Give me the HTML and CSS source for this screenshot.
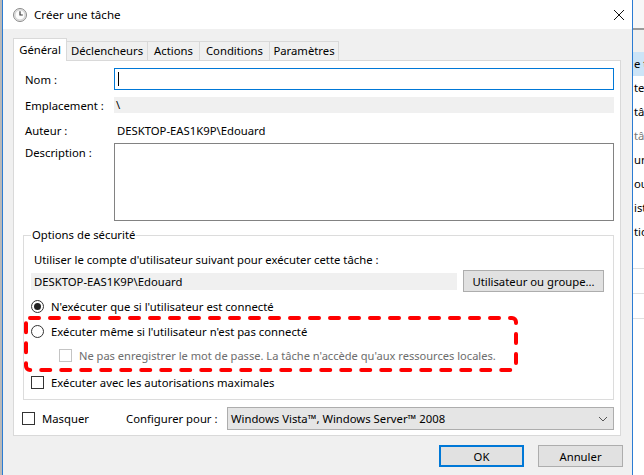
FILE: index.html
```html
<!DOCTYPE html>
<html lang="fr">
<head>
    <meta charset="UTF-8">
    <title>Créer une tâche</title>
    <link rel="stylesheet" href="styles.css">
</head>
<body>
    <div class="screen">
        <div class="bg-left"></div>

        <div class="dialog">
            <div class="titlebar">
                <svg class="app-icon" width="16" height="16" viewBox="0 0 16 16">
                    <circle cx="8" cy="8" r="6.5" fill="#e9e9e9" stroke="#8a8a8a"/>
                    <circle cx="8" cy="8" r="5" fill="#fdfdfd" stroke="#c9c9c9" stroke-width="0.8"/>
                    <path d="M8 4.2V8H10.8" fill="none" stroke="#3a3a3a" stroke-width="1.2"/>
                </svg>
                <span class="title">Créer une tâche</span>
                <svg class="close" width="12" height="12" viewBox="0 0 12 12">
                    <path d="M1 1L11 11M11 1L1 11" stroke="#111" stroke-width="1"/>
                </svg>
            </div>

            <div class="content">
                <div class="tabs">
                    <div class="tab active" style="width:52px">Général</div>
                    <div class="tab" style="width:80px">Déclencheurs</div>
                    <div class="tab" style="width:51px">Actions</div>
                    <div class="tab" style="width:69px">Conditions</div>
                    <div class="tab" style="width:68px">Paramètres</div>
                </div>

                <div class="panel">
                    <div class="field-row">
                        <label class="field-label">Nom :</label>
                        <div class="text-input focused"><span class="caret"></span></div>
                    </div>
                    <div class="field-row row-location">
                        <label class="field-label">Emplacement :</label>
                        <div class="readonly">\</div>
                    </div>
                    <div class="field-row row-author">
                        <label class="field-label">Auteur :</label>
                        <div class="plain-value">DESKTOP-EAS1K9P\Edouard</div>
                    </div>
                    <div class="field-row row-desc">
                        <label class="field-label">Description :</label>
                        <div class="textarea"></div>
                    </div>

                    <fieldset class="group">
                        <legend>Options de sécurité</legend>
                        <div class="group-hint">Utiliser le compte d'utilisateur suivant pour exécuter cette tâche :</div>
                        <div class="account-row">
                            <div class="account-field">DESKTOP-EAS1K9P\Edouard</div>
                            <button class="btn">Utilisateur ou groupe...</button>
                        </div>
                        <div class="option">
                            <span class="radio checked"></span>
                            <span>N'exécuter que si l'utilisateur est connecté</span>
                        </div>
                        <div class="highlight">
                            <svg class="dash-frame" width="494" height="56" viewBox="0 0 494 56">
                                <rect x="2" y="2" width="490" height="52" rx="4" fill="none" stroke="#ff0000" stroke-width="4" stroke-dasharray="9 11" stroke-linecap="round"/>
                            </svg>
                            <div class="option">
                                <span class="radio"></span>
                                <span>Exécuter même si l'utilisateur n'est pas connecté</span>
                            </div>
                            <div class="option sub disabled">
                                <span class="checkbox"></span>
                                <span class="note">Ne pas enregistrer le mot de passe. La tâche n'accède qu'aux ressources locales.</span>
                            </div>
                        </div>
                        <div class="option max">
                            <span class="checkbox"></span>
                            <span>Exécuter avec les autorisations maximales</span>
                        </div>
                    </fieldset>

                    <div class="bottom-row">
                        <div class="option hide">
                            <span class="checkbox"></span>
                            <span>Masquer</span>
                        </div>
                        <span class="config-label">Configurer pour :</span>
                        <div class="select">
                            <span>Windows Vista™, Windows Server™ 2008</span>
                            <svg width="10" height="6" viewBox="0 0 10 6">
                                <path d="M1 1L5 5L9 1" fill="none" stroke="#555" stroke-width="1"/>
                            </svg>
                        </div>
                    </div>
                </div>

                <div class="buttons">
                    <button class="btn dlg default">OK</button>
                    <button class="btn dlg">Annuler</button>
                </div>
            </div>
        </div>

        <div class="bg-right">
            <div class="bg-top"></div>
            <div class="bg-header"></div>
            <div class="bg-row selected">e t</div>
            <div class="bg-row">te</div>
            <div class="bg-row">tâ</div>
            <div class="bg-row muted">tâ</div>
            <div class="bg-row">un</div>
            <div class="bg-row">ou</div>
            <div class="bg-row">ist</div>
            <div class="bg-row">tio</div>
            <div class="bg-line"></div>
            <div class="bg-line"></div>
            <div class="bg-line"></div>
        </div>
    </div>
</body>
</html>
```

FILE: styles.css
```css
body {
    margin: 0;
    font-family: "Noto Sans", "Open Sans", sans-serif;
    font-size: 11.3px;
    color: #000;
    background-color: #f0f0f0;
}
.screen {
    display: flex;
    width: 644px;
    height: 475px;
    overflow: hidden;
}
.bg-left {
    width: 2px;
    background-color: #b9b9b9;
}
.dialog {
    width: 629px;
    border-left: 1px solid #2b7cd3;
    border-right: 1px solid #2b7cd3;
    background-color: #f0f0f0;
    display: flex;
    flex-direction: column;
}
.titlebar {
    height: 29px;
    background-color: #fff;
    display: flex;
    align-items: center;
}
.app-icon {
    margin-left: 9px;
    margin-right: 6px;
}
.title {
    font-size: 11.6px;
    flex: 1;
}
.close {
    margin-right: 7px;
}
.content {
    padding: 9px 11px 0 10px;
}
.tabs {
    display: flex;
    align-items: flex-end;
    height: 23px;
    margin-bottom: -1px;
    position: relative;
    z-index: 1;
}
.tab {
    height: 18px;
    line-height: 18px;
    border: 1px solid #d9d9d9;
    margin-left: -1px;
    text-align: center;
    background-color: #f0f0f0;
    box-sizing: content-box;
}
.tab.active {
    height: 22px;
    line-height: 21px;
    border-bottom: none;
    background-color: #fff;
    margin-left: 0;
    z-index: 2;
}
.panel {
    background-color: #fff;
    border: 1px solid #d9d9d9;
    padding: 7px 6px 5px 9px;
}
.field-row {
    display: flex;
    align-items: center;
}
.field-label {
    width: 89px;
    padding-left: 2px;
    flex-shrink: 0;
}
.text-input {
    flex: 1;
    height: 20px;
    border: 1px solid #0078d7;
    display: flex;
    align-items: center;
}
.caret {
    width: 1px;
    height: 14px;
    margin-left: 3px;
    background-color: #000;
}
.row-location {
    margin-top: 7px;
}
.readonly {
    flex: 1;
    height: 16px;
    line-height: 16px;
    padding-left: 2px;
    background-color: #f0f0f0;
}
.row-author {
    margin-top: 9px;
    height: 16px;
}
.plain-value {
    padding-left: 3px;
}
.row-desc {
    margin-top: 5px;
    align-items: flex-start;
}
.row-desc .field-label {
    padding-top: 2px;
}
.textarea {
    flex: 1;
    height: 76px;
    border: 1px solid #828282;
}
.group {
    margin: 6px 0 0 0;
    padding: 0 7px 9px 7px;
    border: 1px solid #dcdcdc;
    min-width: 0;
}
.group legend {
    padding: 0 1px;
    line-height: 16px;
}
.group-hint {
    margin-top: 9px;
    padding-left: 3px;
    line-height: 16px;
}
.account-row {
    display: flex;
    align-items: center;
    gap: 6px;
    margin-top: 2px;
}
.account-field {
    width: 423px;
    height: 17px;
    line-height: 17px;
    padding-left: 3px;
    background-color: #f0f0f0;
}
.btn {
    font-family: inherit;
    font-size: inherit;
    color: #000;
    height: 22px;
    padding: 0;
    background-color: #e1e1e1;
    border: 1px solid #adadad;
}
.account-row .btn {
    width: 141px;
}
.option {
    display: flex;
    align-items: center;
    gap: 7px;
    height: 16px;
    margin-top: 6px;
}
.radio {
    width: 11px;
    height: 11px;
    border: 1px solid #333;
    border-radius: 50%;
    display: flex;
    align-items: center;
    justify-content: center;
    flex-shrink: 0;
}
.radio.checked::after {
    content: "";
    width: 7px;
    height: 7px;
    border-radius: 50%;
    background-color: #222;
}
.checkbox {
    width: 11px;
    height: 11px;
    border: 1px solid #333;
    flex-shrink: 0;
}
.highlight {
    position: relative;
    margin: 2px 0 0 -7px;
    width: 487px;
    padding: 7px 0 9px 7px;
}
.dash-frame {
    position: absolute;
    left: 0;
    top: 0;
}
.highlight .option:first-of-type {
    margin-top: 0;
}
.option.sub {
    margin-top: 8px;
    margin-left: 28px;
}
.option.disabled {
    color: #6d6d6d;
}
.option.disabled .checkbox {
    border-color: #c4c4c4;
}
.note {
    font-size: 11.1px;
}
.option.max {
    margin-top: 2px;
}
.bottom-row {
    display: flex;
    align-items: center;
    margin-top: 7px;
}
.option.hide {
    margin: 0 0 0 -1px;
    width: 104px;
}
.config-label {
    width: 101px;
}
.select {
    flex: 1;
    height: 21px;
    background-color: #e5e5e5;
    border: 1px solid #adadad;
    display: flex;
    align-items: center;
    justify-content: space-between;
    padding: 0 5px 0 3px;
}
.buttons {
    display: flex;
    justify-content: flex-end;
    gap: 14px;
    margin: 9px -2px 0 0;
}
.btn.dlg {
    width: 85px;
}
.btn.default {
    border: 2px solid #0078d7;
}
.bg-right {
    flex: 1;
    background-color: #fff;
    overflow: hidden;
    white-space: nowrap;
}
.bg-top {
    height: 28px;
    background-color: #f7f7f7;
}
.bg-header {
    height: 22px;
    border-top: 2px solid #9a9a9a;
    background-color: #f0f0f0;
}
.bg-row {
    height: 24px;
    line-height: 24px;
    padding-left: 1px;
}
.bg-row.selected {
    background-color: #cce4f7;
}
.bg-row.muted {
    color: #777;
}
.bg-line {
    height: 24px;
    border-bottom: 1px solid #e0e0e0;
}
```
